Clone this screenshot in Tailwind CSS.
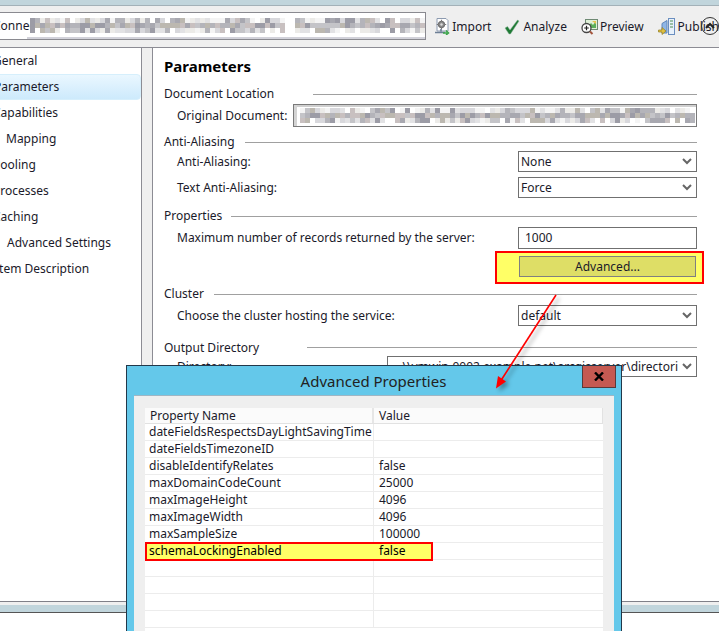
<!DOCTYPE html>
<html lang="en">
<head>
    <meta charset="UTF-8">
    <title>Service Editor - Parameters</title>
    <script src="https://cdn.jsdelivr.net/npm/@tailwindcss/browser@4"></script>
</head>
<body class="bg-white">
<div class="relative w-[719px] h-[631px] overflow-hidden flex flex-col bg-white text-[#1a1a2a] text-[11px] leading-[14px] font-['Noto_Sans','Open_Sans',sans-serif]">

    <!-- window strip -->
    <div class="h-[6px] shrink-0 bg-[#c1d5dc] border-b border-[#a3b1b8]"></div>

    <!-- toolbar -->
    <div class="h-[41px] shrink-0 bg-[#efefef] flex items-center relative">
        <div class="relative w-[435px] h-[28px] -mt-[1px] bg-white border border-l-0 border-[#8a8a90] overflow-hidden flex items-center">
            <span class="-ml-[7px] text-[12px]">Connec</span>
            <svg id="blurTop" class="absolute left-[27px] top-0" width="408" height="27"></svg>
        </div>
        <div class="flex items-center ml-[8px]">
            <svg width="16" height="17" viewBox="0 0 16 17">
                <path d="M3 .5h9l2 2V13H3z" fill="#fff" stroke="#8d9bb0"/>
                <circle cx="7.5" cy="6.5" r="3.2" fill="#8a8a8a" stroke="#666"/>
                <circle cx="7.5" cy="6.5" r="1.2" fill="#ddd"/>
                <path d="M7.5 1.8v1.4M7.5 9.8v1.4M2.8 6.5h1.4M10.8 6.5h1.4" stroke="#777" stroke-width="1.2"/>
                <path d="M7 11v2.5M1 14.5h10" stroke="#6e7f96" stroke-width="1.6"/>
                <path d="M9 15h4M12 12.5l2.5 2.5-2.5 2" fill="none" stroke="#3ba54a" stroke-width="1.5"/>
            </svg>
            <span class="ml-[2px] text-[12px]">Import</span>
        </div>
        <div class="flex items-center ml-[13px]">
            <svg width="16" height="16" viewBox="0 0 16 16">
                <path d="M1 9l2.5-1.5L6 11 13.5 1 15 2 6.5 15H5z" fill="#1f7a35" stroke="#8fb59a" stroke-width=".5"/>
            </svg>
            <span class="ml-[3px] text-[12px]">Analyze</span>
        </div>
        <div class="flex items-center ml-[14px]">
            <svg width="17" height="16" viewBox="0 0 17 16">
                <rect x="4.5" y=".5" width="12" height="10" fill="#dff0d8" stroke="#6f8a74"/>
                <path d="M6 9l4-5 2 2 3-4v7z" fill="#5cae5a"/>
                <path d="M11 2h4v3z" fill="#e6c24a"/>
                <circle cx="5.5" cy="9" r="4.5" fill="#fff" stroke="#444" stroke-width="1.3"/>
                <path d="M3.2 9h4.6M5.5 6.7v4.6" stroke="#222" stroke-width="1.2"/>
                <path d="M9 12.5l2.5 2.5" stroke="#a3543c" stroke-width="2"/>
            </svg>
            <span class="ml-[2px] text-[12px]">Preview</span>
        </div>
        <div class="flex items-center ml-[14px]">
            <svg width="17" height="18" viewBox="0 0 17 18">
                <rect x="10.5" y=".5" width="6" height="16" fill="#e8f1fb" stroke="#6b8fc0"/>
                <path d="M12 3h3M12 6h3M12 9h3" stroke="#4d8f55" stroke-width="1.2"/>
                <path d="M4 5.5l5-3V15H4z" fill="#8fb6e6" stroke="#5f86bb"/>
                <path d="M.5 12H4V9.5l4 3.5-4 3.5V14H.5z" fill="#e0c040" stroke="#927c1c" stroke-width=".7"/>
            </svg>
            <span class="ml-[3px] text-[12px]">Publish</span>
        </div>
        <div class="absolute left-[701px] top-[11px] w-[18px] h-[18px] rounded-full border border-[#333] flex items-center justify-center">
            <svg width="10" height="8" viewBox="0 0 10 8"><path d="M1 6l4-4 4 4" fill="none" stroke="#222" stroke-width="2"/></svg>
        </div>
    </div>

    <!-- panels -->
    <div class="h-[554px] shrink-0 flex bg-[#efefef] border-t border-[#8c8c94]">
        <div class="w-[142px] shrink-0 bg-white border-r border-[#8c8c94] text-[12px]">
            <div class="h-[26px] flex items-center -ml-[7px]">General</div>
            <div class="h-[26px] flex items-center -ml-[7px] mr-[0px] bg-gradient-to-b from-[#eaf7ff] to-[#cdeafc] rounded-sm border border-[#d6effc] pl-0">Parameters</div>
            <div class="h-[26px] flex items-center -ml-[7px]">Capabilities</div>
            <div class="h-[26px] flex items-center pl-[6px]">Mapping</div>
            <div class="h-[26px] flex items-center -ml-[7px]">Pooling</div>
            <div class="h-[26px] flex items-center -ml-[7px]">Processes</div>
            <div class="h-[26px] flex items-center -ml-[7px]">Caching</div>
            <div class="h-[26px] flex items-center pl-[7px]">Advanced Settings</div>
            <div class="h-[26px] flex items-center -ml-[5px]">Item Description</div>
        </div>

        <div class="ml-[10px] flex-1 bg-white border-l border-[#8c8c94] pl-[11px] pr-[22px] text-[12px]">
            <div class="h-[36px] flex items-center font-bold text-[15px] text-black">Parameters</div>

            <div class="h-[20px] flex items-center">Document Location<div class="ml-[39px] flex-1 h-px bg-[#a0a0a0]"></div></div>
            <div class="h-[23px] flex items-center pl-[13px]">
                <span class="w-[116px]">Original Document:</span>
                <div class="relative flex-1 h-[23px] border border-[#7a7a7a] bg-white overflow-hidden">
                    <svg id="blurDoc" class="absolute left-0 top-0" width="402" height="21"></svg>
                </div>
            </div>

            <div class="mt-[6px] h-[18px] flex items-center">Anti-Aliasing<div class="ml-[10px] flex-1 h-px bg-[#a0a0a0]"></div></div>
            <div class="h-[21px] flex items-center justify-between pl-[13px]">
                <span>Anti-Aliasing:</span>
                <div class="w-[179px] h-[21px] border border-[#707070] flex items-center justify-between pl-[2px] pr-[4px]">
                    <span>None</span>
                    <svg width="10" height="7" viewBox="0 0 10 7"><path d="M1 1l4 4 4-4" fill="none" stroke="#666" stroke-width="2"/></svg>
                </div>
            </div>
            <div class="mt-[5px] h-[21px] flex items-center justify-between pl-[13px]">
                <span>Text Anti-Aliasing:</span>
                <div class="w-[179px] h-[21px] border border-[#707070] flex items-center justify-between pl-[2px] pr-[4px]">
                    <span>Force</span>
                    <svg width="10" height="7" viewBox="0 0 10 7"><path d="M1 1l4 4 4-4" fill="none" stroke="#666" stroke-width="2"/></svg>
                </div>
            </div>

            <div class="mt-[9px] h-[18px] flex items-center">Properties<div class="ml-[9px] flex-1 h-px bg-[#a0a0a0]"></div></div>
            <div class="mt-[2px] h-[22px] flex items-center justify-between pl-[13px]">
                <span>Maximum number of records returned by the server:</span>
                <div class="w-[179px] h-[22px] border border-[#707070] flex items-center pl-[6px]">1000</div>
            </div>
            <div class="mt-[2px] -mr-[7px] flex justify-end">
                <div class="w-[209px] h-[33px] border-2 border-[#f00] bg-[#ffff66] pl-[22px] pr-[6px] pt-[3px]">
                    <div class="h-[21px] border border-[#808080] bg-[#dede66] flex items-center justify-center">Advanced...</div>
                </div>
            </div>

            <div class="mt-[1px] h-[18px] flex items-center">Cluster<div class="ml-[10px] flex-1 h-px bg-[#a0a0a0]"></div></div>
            <div class="mt-[2px] h-[21px] flex items-center justify-between pl-[13px]">
                <span>Choose the cluster hosting the service:</span>
                <div class="w-[179px] h-[21px] border border-[#707070] flex items-center justify-between pl-[2px] pr-[4px]">
                    <span>default</span>
                    <svg width="10" height="7" viewBox="0 0 10 7"><path d="M1 1l4 4 4-4" fill="none" stroke="#666" stroke-width="2"/></svg>
                </div>
            </div>

            <div class="mt-[13px] h-[17px] flex items-center">Output Directory<div class="ml-[48px] flex-1 h-px bg-[#a0a0a0]"></div></div>
            <div class="h-[21px] flex items-center justify-between pl-[13px]">
                <span>Directory:</span>
                <div class="w-[310px] h-[21px] border border-[#707070] flex items-center pl-[2px] pr-[4px]">
                    <span class="flex-1 overflow-hidden whitespace-nowrap flex justify-end pr-[4px]">\\vmwin-0002.example.net\arcgisserver\directori</span>
                    <svg class="shrink-0" width="10" height="7" viewBox="0 0 10 7"><path d="M1 1l4 4 4-4" fill="none" stroke="#666" stroke-width="2"/></svg>
                </div>
            </div>
        </div>
    </div>

    <!-- bottom of the window behind -->
    <div class="shrink-0 h-[12px] bg-[#efefef] border-t border-[#808088] border-b border-b-[#555]">
        <div class="mt-[3px] h-[7px] bg-[#c1d5dc]"></div>
    </div>

    <!-- dialog -->
    <div class="absolute left-[126px] top-[365px] w-[496px] h-[266px] bg-[#64c8ea] border border-[#22384a] border-b-0 text-[12px]">
        <div class="h-[29px] relative flex items-center justify-center pr-[1px]">
            <span class="text-[15px] text-[#222]">Advanced Properties</span>
            <div class="absolute right-[5px] top-0 w-[34px] h-[22px] bg-[#c55a52] border border-[#5a3a3a] border-t-0 flex items-center justify-center">
                <svg width="10" height="9" viewBox="0 0 10 9"><path d="M1 .5l8 8M9 .5l-8 8" stroke="#000" stroke-width="2.4"/></svg>
            </div>
        </div>
        <div class="ml-[7px] w-[480px] h-[237px] bg-[#efefef] border-t border-[#9fb6c4] pl-[11px] pt-[12px]">
            <div class="w-[458px] h-[224px] bg-white overflow-hidden">
                <div class="h-[16px] flex bg-[#fbfbfb] border-b border-[#e2e2e2] border-r">
                    <div class="w-[229px] pl-[5px] border-r-2 border-[#e6e6e6] flex items-center">Property Name</div>
                    <div class="pl-[5px] flex items-center">Value</div>
                </div>
                <div class="h-[17px] flex border-b border-[#ececec]"><div class="w-[229px] pl-[4px] border-r border-[#ececec] flex items-center">dateFieldsRespectsDayLightSavingTime</div><div class="pl-[5px] flex items-center"></div></div>
                <div class="h-[17px] flex border-b border-[#ececec]"><div class="w-[229px] pl-[4px] border-r border-[#ececec] flex items-center">dateFieldsTimezoneID</div><div class="pl-[5px] flex items-center"></div></div>
                <div class="h-[17px] flex border-b border-[#ececec]"><div class="w-[229px] pl-[4px] border-r border-[#ececec] flex items-center">disableIdentifyRelates</div><div class="pl-[5px] flex items-center">false</div></div>
                <div class="h-[17px] flex border-b border-[#ececec]"><div class="w-[229px] pl-[4px] border-r border-[#ececec] flex items-center">maxDomainCodeCount</div><div class="pl-[5px] flex items-center">25000</div></div>
                <div class="h-[17px] flex border-b border-[#ececec]"><div class="w-[229px] pl-[4px] border-r border-[#ececec] flex items-center">maxImageHeight</div><div class="pl-[5px] flex items-center">4096</div></div>
                <div class="h-[17px] flex border-b border-[#ececec]"><div class="w-[229px] pl-[4px] border-r border-[#ececec] flex items-center">maxImageWidth</div><div class="pl-[5px] flex items-center">4096</div></div>
                <div class="h-[17px] flex border-b border-[#ececec]"><div class="w-[229px] pl-[4px] border-r border-[#ececec] flex items-center">maxSampleSize</div><div class="pl-[5px] flex items-center">100000</div></div>
                <div class="relative h-[17px] flex border-b border-[#ececec]">
                    <div class="absolute -top-[1px] left-0 w-[288px] h-[19px] bg-[#ffff66] border-2 border-[#f00]"></div>
                    <div class="relative w-[229px] pl-[4px] flex items-center text-black">schemaLockingEnabled</div>
                    <div class="relative pl-[5px] flex items-center text-black">false</div>
                </div>
                <div class="h-[17px] flex border-b border-[#ececec]"><div class="w-[229px] border-r border-[#ececec]"></div></div>
                <div class="h-[17px] flex border-b border-[#ececec]"><div class="w-[229px] border-r border-[#ececec]"></div></div>
                <div class="h-[17px] flex border-b border-[#ececec]"><div class="w-[229px] border-r border-[#ececec]"></div></div>
                <div class="h-[17px] flex border-b border-[#ececec]"><div class="w-[229px] border-r border-[#ececec]"></div></div>
            </div>
        </div>
    </div>

    <!-- callout arrow -->
    <svg class="absolute left-0 top-0 pointer-events-none drop-shadow-[3px_3px_2px_rgba(0,0,0,0.35)]" width="719" height="631">
        <path d="M556 295L500 382" stroke="#f00" stroke-width="1.6" fill="none"/>
        <path d="M496 388.5L498 376L506 381.5z" fill="#f00"/>
    </svg>
</div>

<script>
    // blurred-out paths: pixel blocks, not readable text
    var seed = 7;
    function rnd() {
        seed = (seed * 16807) % 2147483647;
        return seed / 2147483647;
    }
    var light = ['#ffffff', '#f4f4f4', '#ecebe8', '#e2e2e4', '#d8d8dc'];
    var dark = ['#c4c4c8', '#b4b4ba', '#a8a8b0', '#bcb8b0', '#c8c0c0', '#9c9ca6'];

    function fillBlur(id, x0, x1, y0, rows, gaps) {
        var svg = document.getElementById(id);
        var out = '';
        for (var r = 0; r < rows; r++) {
            for (var x = x0; x < x1; x += 5) {
                var skip = gaps.some(function (g) { return x >= g[0] && x < g[1]; });
                if (skip) continue;
                var pick = r === 1 ? dark : (rnd() < 0.45 ? dark : light);
                var c = pick[Math.floor(rnd() * pick.length)];
                out += '<rect x="' + x + '" y="' + (y0 + r * 5) + '" width="5" height="5" fill="' + c + '"/>';
            }
        }
        svg.innerHTML = out;
    }

    fillBlur('blurTop', 3, 403, 5, 3, [[258, 266]]);
    document.getElementById('blurTop').innerHTML += '<rect x="0" y="24" width="408" height="3" fill="#d2d2da"/><rect x="404" y="0" width="4" height="27" fill="#e0e0e4"/>';

    fillBlur('blurDoc', 6, 398, 3, 3, []);
    document.getElementById('blurDoc').innerHTML += '<rect x="0" y="0" width="402" height="2" fill="#cfcfcf"/><rect x="0" y="0" width="3" height="21" fill="#d4d4d4"/>';
</script>
</body>
</html>
